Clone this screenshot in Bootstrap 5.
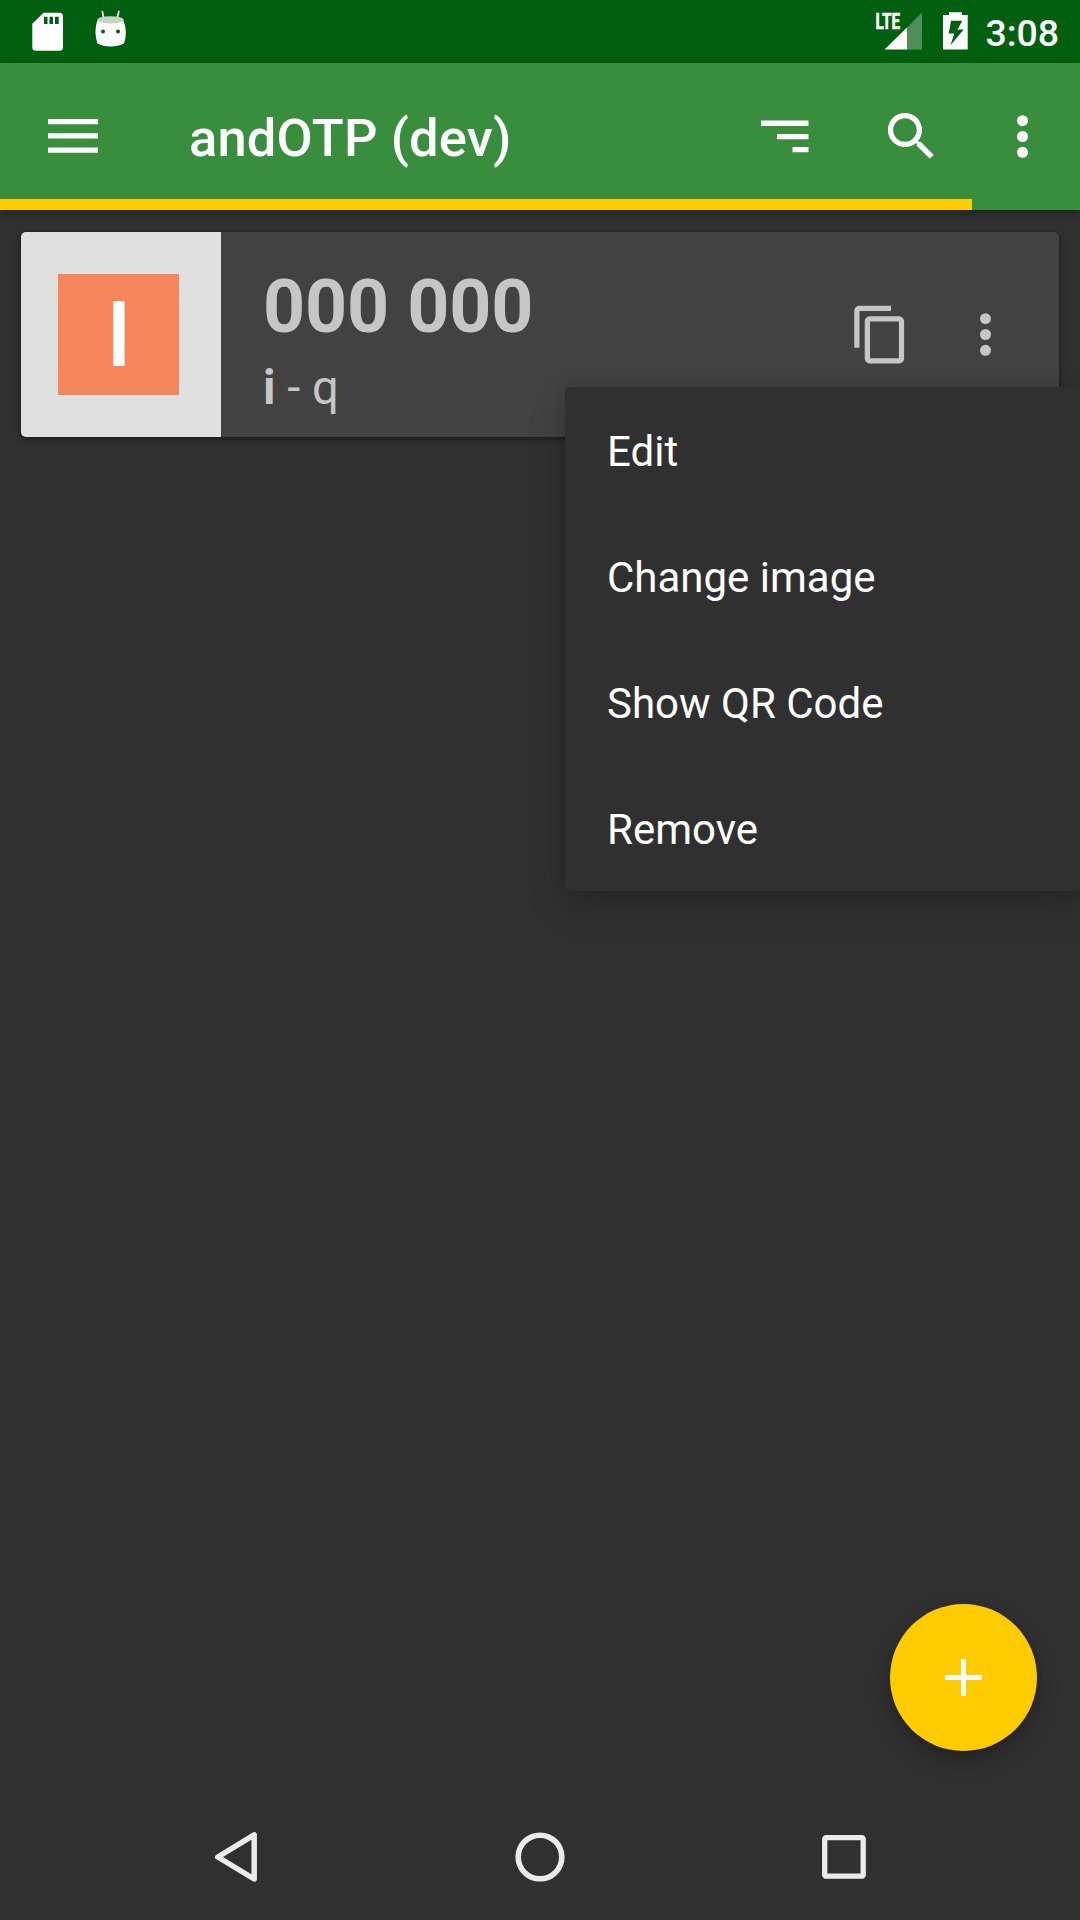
<!DOCTYPE html>
<html lang="en">
<head>
<meta charset="utf-8">
<meta name="viewport" content="width=device-width, initial-scale=1">
<title>andOTP (dev)</title>
<link href="https://cdn.jsdelivr.net/npm/bootstrap@5.3.0/dist/css/bootstrap.min.css" rel="stylesheet">
<style>
body { background: #303030; color: #fff; font-family: Roboto, sans-serif; height: 1920px; overflow: hidden; }
svg { display: block; flex-shrink: 0; }
.status-strip { height: 63px; background: #00600f; padding: 0 21px 0 32px; }
.status-clock { font-size: 37.4px; font-weight: 500; line-height: 1; margin-left: 16px; padding-top: 4px; }
.battery { margin-left: 18px; }
.app-header { height: 147px; background: #388e3c; box-shadow: 0 3px 10px rgba(0,0,0,.3); }
.app-toolbar { height: 136px; padding: 10px 26px 0 48px; }
.app-title { font-size: 52.5px; font-weight: 500; line-height: 63px; letter-spacing: .17px; margin-left: 91px; padding-top: 4px; }
.search-icon { margin-left: 71px; }
.overflow-icon { margin-left: 48px; }
.timer { height: 11px; border-radius: 0; background: transparent; }
.timer .progress-bar { background: #fc0; }
.otp-card { --bs-card-bg: #424242; --bs-card-border-width: 0; --bs-card-border-radius: 5px; color: #c6c6c6; height: 205px; margin: 22px 21px 0; box-shadow: 0 3px 6px rgba(0,0,0,.32), 0 0 3px rgba(0,0,0,.3); }
.thumb { width: 200px; padding-right: 6px; background: #e0e0e0; border-radius: 5px 0 0 5px; }
.thumb-letter { width: 121px; height: 121px; padding: 2px 0 0 2px; background: #f5855a; color: #fff; font-size: 91px; font-weight: 500; line-height: 1; }
.otp-info { margin-left: 42px; padding-top: 32px; }
.otp-code { font-size: 73.5px; font-weight: 700; line-height: 86px; letter-spacing: -.15px; }
.otp-label { font-size: 47.25px; line-height: 56px; margin-top: 10px; }
.otp-actions { gap: 42px; margin-right: 42px; }
.otp-menu { left: 565px; top: 387px; width: 515px; height: 504px; background: #303030; border-radius: 5px; box-shadow: 0 14px 36px rgba(0,0,0,.22), 0 0 12px rgba(0,0,0,.08); }
.otp-menu .list-group-item { background: transparent; color: #fff; border: 0; height: 126px; font-size: 42px; line-height: 126px; padding: 2px 42px 0; }
.fab { right: 43px; bottom: 169px; width: 147px; height: 147px; background: #fc0; box-shadow: 0 10px 22px rgba(0,0,0,.24), 0 2px 6px rgba(0,0,0,.12); }
.system-nav { height: 126px; padding: 0 210px; }
</style>
<script src="https://cdn.jsdelivr.net/npm/bootstrap@5.3.0/dist/js/bootstrap.bundle.min.js"></script>
</head>
<body class="position-relative d-flex flex-column">
<div class="status-strip d-flex align-items-center">
  <svg width="32" height="63" viewBox="0 0 32 63"><path fill="#fff" fill-rule="evenodd" d="M11.5 12.7H27.5Q31 12.7 31 16.2V47.2Q31 50.7 27.5 50.7H3.8Q.3 50.7 .3 47.2V23.7ZM12 16.7V24H15.5V16.7ZM17.5 16.7V24H21V16.7ZM23 16.7V24H26.7V16.7Z"/></svg>
  <svg class="ms-4" width="48" height="63" viewBox="88 0 48 63"><path d="M102.3 11.5 103.7 18M118.8 11.5 117.3 18" stroke="#fff" stroke-width="1.7" stroke-linecap="round"/><path fill="#fff" d="M97.3 20.5Q110.5 25.5 123.5 20.5Q128 32 124 43.5Q118 46.5 110.5 46.5T97.5 43.5Q93.5 32 97.3 20.5Z"/><ellipse cx="110.5" cy="19.8" rx="13.2" ry="3.6" fill="#bfd7c3"/><circle cx="103" cy="31.5" r="2" fill="#00600f"/><circle cx="118" cy="31.5" r="2" fill="#00600f"/></svg>
  <svg class="ms-auto" width="50" height="63" viewBox="874 0 50 63"><path fill="#4d8f57" d="M922 12.5V49.5H907V27.5Z"/><path fill="#fff" d="M907 27.5V49.5H884.5Z"/><text x="875.5" y="29" textLength="24.5" lengthAdjust="spacingAndGlyphs" font-family="Roboto, sans-serif" font-weight="700" font-size="22" fill="#fff" stroke="#fff" stroke-width=".6">LTE</text></svg>
  <svg class="battery" width="27" height="63" viewBox="942 0 27 63"><path fill="#fff" fill-rule="evenodd" d="M949 12.3H962V15H967.7V49.5H943V15H949ZM951 20.8 948.7 33.5H954.3L950.5 45.3 963.7 29.5H957.5L962.3 20.8Z"/></svg>
  <div class="status-clock">3:08</div>
</div>
<header class="app-header">
  <div class="app-toolbar d-flex align-items-center">
    <svg width="50" height="34" viewBox="0 0 50 34"><path fill="#fff" d="M0 0H50V5.3H0ZM0 14.3H50V19.6H0ZM0 28.5H50V33.8H0Z"/></svg>
    <div class="app-title">andOTP (dev)</div>
    <svg class="ms-auto" width="48" height="63" viewBox="761 104 48 63"><path fill="#fff" d="M761 119.5H808.5V125H761ZM777 133H808.5V138.3H777ZM792.5 146H808.5V151.3H792.5Z"/></svg>
    <svg class="search-icon" width="63" height="63" viewBox="0 0 24 24"><path fill="#fff" d="M15.5 14h-.79l-.28-.27A6.471 6.471 0 0 0 16 9.5 6.5 6.5 0 1 0 9.5 16c1.61 0 3.09-.59 4.23-1.57l.27.28v.79l5 4.99L20.49 19l-4.99-5zm-6 0C7.01 14 5 11.99 5 9.5S7.01 5 9.5 5 14 7.01 14 9.5 11.99 14 9.5 14z"/></svg>
    <svg class="overflow-icon" width="63" height="63" viewBox="0 0 63 63"><g fill="#fff"><circle cx="31.5" cy="15.7" r="5.5"/><circle cx="31.5" cy="31.5" r="5.5"/><circle cx="31.5" cy="47.3" r="5.5"/></g></svg>
  </div>
  <div class="progress timer"><div class="progress-bar" style="width:90%"></div></div>
</header>
<main class="flex-grow-1">
  <div class="card otp-card flex-row">
    <div class="thumb d-flex align-items-center justify-content-center"><div class="thumb-letter d-flex align-items-center justify-content-center">I</div></div>
    <div class="otp-info flex-grow-1">
      <div class="otp-code">000 000</div>
      <div class="otp-label"><b>i</b> - q</div>
    </div>
    <div class="otp-actions d-flex align-items-center">
      <svg width="63" height="63" viewBox="0 0 24 24"><path fill="#c6c6c6" d="M16 1H4c-1.1 0-2 .9-2 2v14h2V3h12V1zm3 4H8c-1.1 0-2 .9-2 2v14c0 1.1.9 2 2 2h11c1.1 0 2-.9 2-2V7c0-1.1-.9-2-2-2zm0 16H8V7h11v14z"/></svg>
      <svg width="63" height="63" viewBox="0 0 63 63"><g fill="#c6c6c6"><circle cx="31.5" cy="15.7" r="5.5"/><circle cx="31.5" cy="31.5" r="5.5"/><circle cx="31.5" cy="47.3" r="5.5"/></g></svg>
    </div>
  </div>
</main>
<div class="otp-menu list-group position-absolute">
  <a class="list-group-item">Edit</a>
  <a class="list-group-item">Change image</a>
  <a class="list-group-item">Show QR Code</a>
  <a class="list-group-item">Remove</a>
</div>
<div class="fab position-absolute rounded-circle d-flex align-items-center justify-content-center">
  <svg width="37" height="37" viewBox="0 0 37 37"><path fill="#fff" d="M16 0H21V16H37V21H21V37H16V21H0V16H16Z"/></svg>
</div>
<nav class="system-nav d-flex align-items-center justify-content-between">
  <svg width="52" height="60" viewBox="210 1827 52 60"><path fill="none" stroke="#ebebeb" stroke-width="5.5" stroke-linejoin="round" d="M254.2 1834.8V1879L217.8 1857Z"/></svg>
  <svg width="60" height="60" viewBox="0 0 60 60"><circle cx="30" cy="30" r="21.8" fill="none" stroke="#ebebeb" stroke-width="5.6"/></svg>
  <svg width="52" height="60" viewBox="0 0 52 60"><rect x="6.7" y="10.7" width="38.5" height="38.5" rx="1.5" fill="none" stroke="#ebebeb" stroke-width="5.3"/></svg>
</nav>
</body>
</html>
